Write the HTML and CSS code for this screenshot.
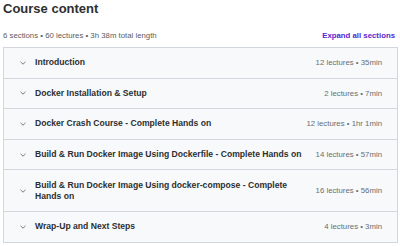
FILE: index.html
```html
<!DOCTYPE html>
<html lang="en">
<head>
    <meta charset="UTF-8">
    <title>Course content</title>
    <link rel="stylesheet" href="styles.css">
</head>
<body>
    <div class="curriculum">
        <h2>Course content</h2>
        <div class="summary">
            <span>6 sections • 60 lectures • 3h 38m total length</span>
            <a class="expand" href="#">Expand all sections</a>
        </div>
        <div class="sections">
            <div class="section">
                <span class="chevron"><svg width="6" height="4" viewBox="0 0 6 4"><path d="M0.5 0.8l2.5 2.4 2.5-2.4" fill="none" stroke="#6a6f73" stroke-width="0.9"/></svg></span>
                <span class="title">Introduction</span>
                <span class="meta">12 lectures • 35min</span>
            </div>
            <div class="section">
                <span class="chevron"><svg width="6" height="4" viewBox="0 0 6 4"><path d="M0.5 0.8l2.5 2.4 2.5-2.4" fill="none" stroke="#6a6f73" stroke-width="0.9"/></svg></span>
                <span class="title">Docker Installation &amp; Setup</span>
                <span class="meta">2 lectures • 7min</span>
            </div>
            <div class="section">
                <span class="chevron"><svg width="6" height="4" viewBox="0 0 6 4"><path d="M0.5 0.8l2.5 2.4 2.5-2.4" fill="none" stroke="#6a6f73" stroke-width="0.9"/></svg></span>
                <span class="title">Docker Crash Course - Complete Hands on</span>
                <span class="meta">12 lectures • 1hr 1min</span>
            </div>
            <div class="section">
                <span class="chevron"><svg width="6" height="4" viewBox="0 0 6 4"><path d="M0.5 0.8l2.5 2.4 2.5-2.4" fill="none" stroke="#6a6f73" stroke-width="0.9"/></svg></span>
                <span class="title">Build &amp; Run Docker Image Using Dockerfile - Complete Hands on</span>
                <span class="meta">14 lectures • 57min</span>
            </div>
            <div class="section">
                <span class="chevron"><svg width="6" height="4" viewBox="0 0 6 4"><path d="M0.5 0.8l2.5 2.4 2.5-2.4" fill="none" stroke="#6a6f73" stroke-width="0.9"/></svg></span>
                <span class="title">Build &amp; Run Docker Image Using docker-compose - Complete Hands on</span>
                <span class="meta">16 lectures • 56min</span>
            </div>
            <div class="section">
                <span class="chevron"><svg width="6" height="4" viewBox="0 0 6 4"><path d="M0.5 0.8l2.5 2.4 2.5-2.4" fill="none" stroke="#6a6f73" stroke-width="0.9"/></svg></span>
                <span class="title">Wrap-Up and Next Steps</span>
                <span class="meta">4 lectures • 3min</span>
            </div>
        </div>
    </div>
</body>
</html>
```

FILE: styles.css
```css
body {
    margin: 0;
    padding: 0;
    background-color: #fff;
    font-family: "Liberation Sans", Arial, sans-serif;
    color: #2d2f31;
}
.curriculum {
    padding: 0 2px 0 3px;
}
h2 {
    margin: 0;
    padding-top: 1px;
    font-size: 13px;
    line-height: 15px;
    font-weight: bold;
}
.summary {
    display: flex;
    justify-content: space-between;
    align-items: center;
    margin-top: 13px;
    height: 12px;
    font-size: 7.8px;
    color: #595c5f;
}
.expand {
    color: #5624d0;
    font-weight: bold;
    text-decoration: none;
    margin-right: 3px;
}
.sections {
    margin-top: 6px;
    border: 1px solid #d1d7dc;
}
.section {
    display: flex;
    align-items: center;
    padding: 9.3px 15px 9.3px 16px;
    background-color: #f7f9fa;
    border-top: 1px solid #d1d7dc;
    font-size: 8.6px;
    line-height: 11px;
}
.section:first-child {
    border-top: none;
}
.chevron {
    display: flex;
    width: 15px;
    flex-shrink: 0;
}
.title {
    flex: 1;
    font-weight: bold;
    padding-right: 12px;
}
.meta {
    flex-shrink: 0;
    font-size: 7.8px;
    color: #6a6f73;
}
```
